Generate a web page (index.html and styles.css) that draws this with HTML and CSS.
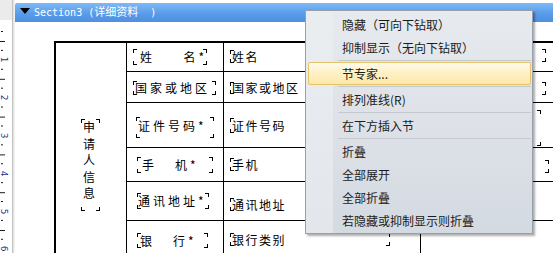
FILE: index.html
```html
<!DOCTYPE html>
<html lang="zh-CN">
<head>
<meta charset="utf-8">
<title>Section3</title>
<link rel="stylesheet" href="styles.css">
</head>
<body>
<div class="app">
  <div class="ruler">
    <div class="ruler-top"></div>
    <div class="nums">
      <div class="num"><span>1</span></div>
      <div class="num"><span>2</span></div>
      <div class="num"><span>3</span></div>
      <div class="num"><span>4</span></div>
      <div class="num"><span>5</span></div>
      <div class="num"><span>6</span></div>
    </div>
  </div>
  <div class="divider"></div>
  <div class="main">
    <div class="topstrip"></div>
    <div class="section-bar">
      <span class="tri"></span>
      <span class="title">Section3 (<span class="cjk">详细资料</span>  )</span>
    </div>
    <div class="canvas">
      <div class="grid">
        <div class="cell side"><div class="fld vfld"><span class="vtext">申请人信息</span></div></div>

        <div class="cell"><div class="fld lab lf1">姓<span class="gap2"></span>名*</div></div>
        <div class="cell"><div class="fld val vf1">姓名</div></div>
        <div class="cell"><div class="fld xf1"></div></div>

        <div class="cell"><div class="fld lab lf2">国家或地区</div></div>
        <div class="cell"><div class="fld val vf2">国家或地区</div></div>
        <div class="cell"><div class="fld xf2"></div></div>

        <div class="cell"><div class="fld lab lf3">证件号码*</div></div>
        <div class="cell"><div class="fld val vf3">证件号码</div></div>
        <div class="cell"><div class="fld xf3"></div></div>

        <div class="cell"><div class="fld lab lf4">手<span class="gap1"></span>机*</div></div>
        <div class="cell"><div class="fld val vf4">手机</div></div>
        <div class="cell"><div class="fld xf4"></div></div>

        <div class="cell"><div class="fld lab lf5">通讯地址*</div></div>
        <div class="cell"><div class="fld val vf5">通讯地址</div></div>
        <div class="cell"></div>

        <div class="cell"><div class="fld lab lf6">银<span class="gap1"></span>行*</div></div>
        <div class="cell"><div class="fld val vf6">银行类别</div></div>
        <div class="cell"></div>
      </div>
    </div>
  </div>

  <div class="menu">
    <div class="mi">隐藏（可向下钻取）</div>
    <div class="mi">抑制显示（无向下钻取）</div>
    <div class="sep"></div>
    <div class="mi hot">节专家...</div>
    <div class="sep"></div>
    <div class="mi">排列准线(R)</div>
    <div class="sep"></div>
    <div class="mi">在下方插入节</div>
    <div class="sep"></div>
    <div class="mi">折叠</div>
    <div class="mi">全部展开</div>
    <div class="mi">全部折叠</div>
    <div class="mi">若隐藏或抑制显示则折叠</div>
  </div>
</div>
</body>
</html>
```

FILE: styles.css
```css
html, body {
  margin: 0;
  padding: 0;
}
body {
  width: 553px;
  height: 253px;
  overflow: hidden;
  background: #fff;
  font-family: "Noto Sans CJK SC", sans-serif;
  color: #000;
}
.app {
  position: relative;
  display: flex;
  width: 553px;
  height: 253px;
  overflow: hidden;
}

/* ---------- vertical ruler ---------- */
.ruler {
  width: 12px;
  flex: none;
  background:
    linear-gradient(to bottom, #1a1a1a 0, #1a1a1a 1px, transparent 1px) 1px 31px / 2px 18.9px repeat-y,
    linear-gradient(to bottom, #1a1a1a 0, #1a1a1a 1px, transparent 1px) 0 41px / 5px 37.8px repeat-y,
    #fff;
}
.ruler-top {
  height: 20px;
  background: #ebebeb;
}
.nums {
  margin-top: 21px;
  display: flex;
  flex-direction: column;
}
.num {
  height: 37.8px;
  width: 8px;
  display: flex;
  align-items: center;
  justify-content: center;
  font: 9px/9px "DejaVu Sans", sans-serif;
  color: #1c3a88;
}
.num span {
  display: block;
  background: #fff;
  transform: rotate(90deg);
}
.divider {
  width: 3px;
  flex: none;
  background: linear-gradient(to right, #c2c2c2 0, #c2c2c2 1px, #e4e4e4 1px, #e4e4e4 2px, #f2f2f2 2px);
}

/* ---------- main area ---------- */
.main {
  flex: 1;
  display: flex;
  flex-direction: column;
  overflow: hidden;
}
.topstrip {
  height: 3px;
  flex: none;
}
.section-bar {
  height: 19px;
  flex: none;
  display: flex;
  align-items: center;
  background: linear-gradient(#7cbaf7, #5899e8 60%, #4d90e2);
  border-top-left-radius: 2px;
  color: #fff;
}
.tri {
  width: 0;
  height: 0;
  border-left: 5.5px solid transparent;
  border-right: 5.5px solid transparent;
  border-top: 6px solid #000;
  margin: -3px 4px 0 5px;
}
.title {
  font: 10px/12px "DejaVu Sans Mono", monospace;
  white-space: pre;
  margin-top: -2px;
}
.cjk {
  font: 11px/12px "Noto Sans CJK SC", sans-serif;
}

.canvas {
  flex: 1;
  padding: 19px 0 0 39px;
}
.grid {
  display: grid;
  width: max-content;
  grid-template-columns: 70px 96px 196px 300px;
  grid-template-rows: 28px 30px 44px 33px 38px 66px;
  gap: 1px;
  background: #000;
  border-top: 2px solid #000;
  border-left: 2px solid #000;
}
.cell {
  background: #fff;
}
.side {
  grid-row: 1 / span 6;
}

/* field placeholder with corner marks */
.fld {
  box-sizing: border-box;
  display: flex;
  align-items: center;
  font-size: 12px;
  line-height: 14px;
  white-space: nowrap;
  background:
    linear-gradient(#000, #000) left top / 4px 1px no-repeat,
    linear-gradient(#000, #000) left top / 1px 4px no-repeat,
    linear-gradient(#000, #000) left bottom / 4px 1px no-repeat,
    linear-gradient(#000, #000) left bottom / 1px 4px no-repeat,
    linear-gradient(#000, #000) right top / 4px 1px no-repeat,
    linear-gradient(#000, #000) right top / 1px 4px no-repeat,
    linear-gradient(#000, #000) right bottom / 4px 1px no-repeat,
    linear-gradient(#000, #000) right bottom / 1px 4px no-repeat;
}
.lab { letter-spacing: 3px; }
.val { letter-spacing: 1.5px; }
.gap2 { display: inline-block; width: 30px; }
.gap1 { display: inline-block; width: 18px; }

.vfld {
  display: block;
  margin: 76px 0 0 25px;
  width: 19px;
  height: 92px;
  padding: 0 0 0 2px;
  white-space: normal;
}
.vtext {
  display: block;
  width: 12px;
  line-height: 16.5px;
  white-space: normal;
  word-break: break-all;
}

.lf1 { margin: 6px 0 0 6px;  width: 74px; height: 16px; padding-left: 7px; }
.lf2 { margin: 9px 0 0 6px;  width: 83px; height: 14px; padding-left: 2px; }
.lf3 { margin: 14px 0 0 9px; width: 78px; height: 21px; padding: 2px 0 0 2px; align-items: flex-start; }
.lf4 { margin: 9px 0 0 10px; width: 76px; height: 16px; padding-left: 5px; }
.lf5 { margin: 11px 0 0 10px; width: 72px; height: 16px; padding-left: 1px; }
.lf6 { margin: 12px 0 0 10px; width: 71px; height: 15px; padding-left: 3px; }

.vf1 { margin: 7px 0 0 6px;  width: 160px; height: 13px; padding-left: 2px; }
.vf2 { margin: 10px 0 0 6px; width: 160px; height: 12px; padding-left: 2px; }
.vf3 { margin: 15px 0 0 6px; width: 160px; height: 15px; padding-left: 2px; }
.vf4 { margin: 10px 0 0 6px; width: 160px; height: 13px; padding-left: 2px; }
.vf5 { margin: 16px 0 0 6px; width: 160px; height: 13px; padding-left: 2px; }
.vf6 { margin: 12px 0 0 6px; width: 160px; height: 13px; padding-left: 2px; }

.xf1 { margin: 6px 0 0 20px;  width: 105px; height: 13px; }
.xf2 { margin: 10px 0 0 20px; width: 105px; height: 13px; }
.xf3 { margin: 7px 0 0 20px;  width: 100px; height: 36px; }
.xf4 { margin: 12px 0 0 20px; width: 108px; height: 13px; }

/* ---------- context menu ---------- */
.menu {
  position: absolute;
  left: 305px;
  top: 10px;
  width: 228px;
  box-sizing: border-box;
  padding: 2px 1px 1px 2px;
  border: 1px solid #979fab;
  background:
    linear-gradient(#eaedf0, #e3e7ec) 0 0 / 27px 100% no-repeat,
    linear-gradient(#e7eaee, #dde1e7 55%, #d4dae2);
  box-shadow: 2px 2px 2px rgba(0, 0, 0, 0.32);
  font: 12px/1 "Noto Sans CJK SC", sans-serif;
  color: #1b1b1b;
}
.mi {
  box-sizing: border-box;
  height: 23px;
  display: flex;
  align-items: center;
  padding-left: 33px;
  border: 1px solid transparent;
  border-radius: 2px;
  white-space: nowrap;
}
.mi.hot {
  border-color: #e5c46c;
  background: linear-gradient(#fffaea, #fef1c6 45%, #fde8a8);
}
.sep {
  height: 1px;
  margin: 1px 0 1px 30px;
  background: #c4c9d0;
}
```
